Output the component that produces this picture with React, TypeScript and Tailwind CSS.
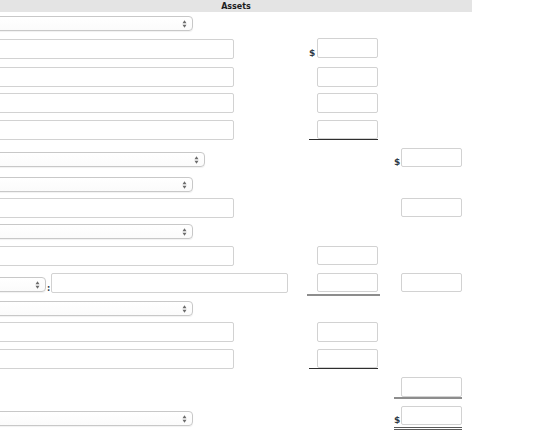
import React from "react";

const FONT = { fontFamily: '"DejaVu Sans", Verdana, sans-serif' };

function Arrows() {
  return (
    <svg
      className="absolute right-[5px] top-1/2 -translate-y-1/2"
      width="5"
      height="9"
      viewBox="0 0 5 9"
    >
      <polygon points="0.5,3.8 2.5,0.8 4.5,3.8" fill="#6b6b6b" />
      <polygon points="0.5,5.2 2.5,8.2 4.5,5.2" fill="#6b6b6b" />
    </svg>
  );
}

function Select({ w, extra = "" }: { w: string; extra?: string }) {
  return (
    <div
      className={`relative -ml-[20px] ${w} h-[15px] rounded-[4px] border border-[#c8c8c8] bg-gradient-to-b from-white to-[#fbfbfb] shadow-[0_1px_1px_rgba(0,0,0,0.06)] ${extra}`}
    >
      <Arrows />
    </div>
  );
}

function Field({ extra = "" }: { extra?: string }) {
  return (
    <div
      className={`-ml-[20px] w-[254px] h-[20px] rounded-[2px] border border-[#d2d2d2] bg-white ${extra}`}
    />
  );
}

function Box({ h = "h-[20px]" }: { h?: string }) {
  return (
    <div className={`w-[61px] ${h} shrink-0 rounded-[2px] border border-[#d2d2d2] bg-white`} />
  );
}

function Dollar({ w }: { w: string }) {
  return (
    <span
      className={`${w} shrink-0 text-[9px] font-bold leading-[9px] text-[#2f3a48]`}
    >
      $
    </span>
  );
}

function Row({ h, children }: { h: string; children: React.ReactNode }) {
  return (
    <div className={`grid grid-cols-[300px_85px_85px] items-start ${h}`}>
      {children}
    </div>
  );
}

export default function App() {
  return (
    <div
      className="w-[560px] h-[432px] overflow-hidden bg-white text-[#222]"
      style={FONT}
    >
      {/* section heading */}
      <div className="h-[12px] w-[472px] bg-[#e4e4e4] flex items-center justify-center pt-[1px] text-[8px] font-bold leading-none text-[#1d1d1d]">
        Assets
      </div>

      <Row h="h-[26px]">
        <div className="mt-[4px]">
          <Select w="w-[213px]" />
        </div>
        <div />
        <div />
      </Row>

      <Row h="h-[29px]">
        <Field extra="mt-[1px]" />
        <div className="ml-[9px] flex items-end">
          <Dollar w="w-[8px]" />
          <Box />
        </div>
        <div />
      </Row>

      <Row h="h-[26px]">
        <Field />
        <div className="ml-[17px]">
          <Box />
        </div>
        <div />
      </Row>

      <Row h="h-[27px]">
        <Field />
        <div className="ml-[17px]">
          <Box />
        </div>
        <div />
      </Row>

      <Row h="h-[28px]">
        <Field />
        <div className="ml-[9px] w-[69px] pl-[8px] border-b border-[#2e2e2e]">
          <Box h="h-[19px]" />
        </div>
        <div />
      </Row>

      <Row h="h-[29px]">
        <div className="mt-[4px]">
          <Select w="w-[225px]" />
        </div>
        <div />
        <div className="ml-[9px] flex items-end">
          <Dollar w="w-[7px]" />
          <Box h="h-[19px]" />
        </div>
      </Row>

      <Row h="h-[21px]">
        <Select w="w-[213px]" />
        <div />
        <div />
      </Row>

      <Row h="h-[26px]">
        <Field />
        <div />
        <div className="ml-[16px]">
          <Box h="h-[19px]" />
        </div>
      </Row>

      <Row h="h-[22px]">
        <Select w="w-[213px]" />
        <div />
        <div />
      </Row>

      <Row h="h-[27px]">
        <Field />
        <div className="ml-[17px]">
          <Box h="h-[19px]" />
        </div>
        <div />
      </Row>

      <Row h="h-[28px]">
        <div className="flex items-end h-[20px]">
          <Select w="w-[66px]" extra="mb-[1px]" />
          <span className="w-[5px] text-center text-[8px] font-bold leading-[8px] text-[#2f3a48]">
            :
          </span>
          <div className="w-[237px] h-[20px] rounded-[2px] border border-[#d2d2d2] bg-white" />
        </div>
        <div className="ml-[7px] w-[73px] pl-[10px] pb-[2px] border-b-2 border-[#8d8d8d]">
          <Box h="h-[19px]" />
        </div>
        <div className="ml-[16px]">
          <Box h="h-[19px]" />
        </div>
      </Row>

      <Row h="h-[21px]">
        <Select w="w-[213px]" />
        <div />
        <div />
      </Row>

      <Row h="h-[27px]">
        <Field />
        <div className="ml-[17px]">
          <Box />
        </div>
        <div />
      </Row>

      <Row h="h-[28px]">
        <Field />
        <div className="ml-[9px] w-[69px] pl-[8px] border-b border-[#2e2e2e]">
          <Box h="h-[19px]" />
        </div>
        <div />
      </Row>

      <Row h="h-[29px]">
        <div />
        <div />
        <div className="ml-[9px] w-[68px] pl-[7px] border-b-2 border-[#8d8d8d]">
          <Box />
        </div>
      </Row>

      <Row h="h-[26px]">
        <div className="mt-[5px]">
          <Select w="w-[213px]" />
        </div>
        <div />
        <div className="ml-[9px] w-[68px] pb-[2px] border-b-[3px] border-double border-[#5a5a5a]">
          <div className="flex items-end">
            <Dollar w="w-[7px]" />
            <Box h="h-[19px]" />
          </div>
        </div>
      </Row>
    </div>
  );
}
